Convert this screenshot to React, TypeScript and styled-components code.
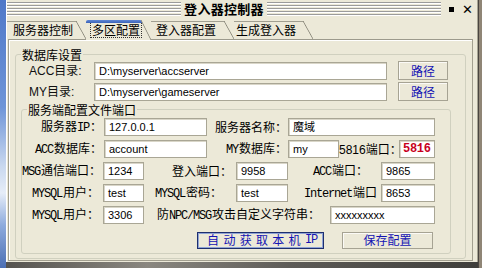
import React from "react";
import styled, { createGlobalStyle, css } from "styled-components";

const Global = createGlobalStyle`
  html, body { margin: 0; padding: 0; }
  body { width: 482px; height: 268px; overflow: hidden; background: #6f8fcf; }
  * { box-sizing: border-box; }
`;

const CJK = `"Noto Sans CJK SC", sans-serif`;
const SANS = `"Liberation Sans", "Noto Sans CJK SC", sans-serif`;

const Desktop = styled.div`
  display: flex;
  width: 482px;
  height: 268px;
`;

const DesktopEdge = styled.div`
  width: 6px;
  background: linear-gradient(
    to bottom,
    #4f78c8 0%,
    #6f95d8 40%,
    #c9d8ef 62%,
    #e6edf8 72%,
    #8eabdd 84%,
    #4c6fb4 100%
  );
`;

const Main = styled.div`
  display: flex;
  flex-direction: column;
  width: 472px;
`;

const Taskbar = styled.div`
  flex: 1;
  background: linear-gradient(to right, #55534f, #8a8780 30%, #5d5b57 60%, #3f3e3b);
`;

const RightEdge = styled.div`
  width: 4px;
  background: linear-gradient(to right, #4a4540 0 1px, #8f8576 1px);
`;

const Window = styled.div`
  height: 262px;
  display: flex;
  flex-direction: column;
  background: #ece9d8;
  box-shadow: inset 1px 0 0 #ffffff, inset -1px 0 0 #a7a493;
  font-family: ${CJK};
  font-size: 12px;
  color: #000;
`;

const TitleBar = styled.div`
  height: 20px;
  display: flex;
  align-items: center;
  padding-left: 1px;
`;

const Stripes = styled.div`
  flex: 1;
  height: 15px;
  background: repeating-linear-gradient(
    to bottom,
    #9b9b9b 0 1px,
    #ffffff 1px 2px,
    #ece9d8 2px 3px
  );
`;

const Title = styled.div`
  margin: 0 3px;
  font-weight: bold;
  font-size: 13px;
  line-height: 18px;
  letter-spacing: 0.3px;
`;

const Controls = styled.div`
  width: 37px;
  display: flex;
  align-items: center;
  justify-content: flex-end;
  gap: 8px;
  padding-right: 5px;
`;

const Square = styled.span`
  width: 5px;
  height: 5px;
  background: #000;
`;

const Cross = styled.span`
  font-family: "DejaVu Sans", sans-serif;
  font-size: 13px;
  line-height: 13px;
`;

const Body = styled.div`
  flex: 1;
  display: flex;
  flex-direction: column;
  padding: 0 5px 2px 2px;
`;

const TabStrip = styled.div`
  height: 21px;
  display: flex;
  align-items: flex-end;
  margin-left: -1px;
  position: relative;
  z-index: 1;
`;

const Tab = styled.div<{ $w: number; $pl: number; $active?: boolean }>`
  position: relative;
  width: ${(p) => p.$w}px;
  height: 18px;
  padding-left: ${(p) => p.$pl}px;
  display: flex;
  align-items: center;
  font-size: 12px;
  line-height: 14px;
  white-space: nowrap;
  background: #ece9d8;
  &::before {
    content: "";
    position: absolute;
    left: 0;
    top: 0;
    right: 9px;
    height: 1px;
    background: #a19f91;
  }
  &::after {
    content: "";
    position: absolute;
    right: 0;
    top: 0;
    bottom: 0;
    width: 10px;
    background: linear-gradient(
      to top right,
      transparent calc(50% - 0.8px),
      #8d8b7d 50%,
      transparent calc(50% + 0.8px)
    );
  }
  ${(p) =>
    p.$active &&
    css`
      height: 20px;
      margin-bottom: -1px;
      &::before {
        height: 3px;
        border-radius: 2px 2px 0 0;
        background: linear-gradient(to bottom, #5f86d6, #3a63b8);
      }
    `}
`;

const Focus = styled.span`
  outline: 1px dotted #333;
  outline-offset: 0px;
  padding: 0 1px;
`;

const Panel = styled.div`
  flex: 1;
  display: flex;
  flex-direction: column;
  border: 1px solid #a3a090;
  border-top-color: #9c9a8c;
  box-shadow: inset 1px 1px 0 #fff;
  padding: 8px 6px 1px 6px;
`;

const Group = styled.fieldset<{ $w?: number; $ml?: number }>`
  margin: 0 0 0 ${(p) => p.$ml ?? 0}px;
  padding: 0;
  ${(p) => (p.$w ? `width: ${p.$w}px;` : "")}
  border: 1px solid #d0d0bf;
  border-radius: 3px;
  min-inline-size: 0;
  display: flex;
  flex-direction: column;
`;

const Outer = styled(Group)`
  flex: 1;
  padding-bottom: 4px;
`;

const Legend = styled.legend`
  margin-left: 5px;
  padding: 0 1px;
  font-size: 12px;
  line-height: 13px;
  color: #000;
`;

const PathRow = styled.div`
  display: flex;
  align-items: center;
  height: 19px;
  padding-left: 13px;
  margin-bottom: 2px;
`;

const PathLabel = styled.div`
  width: 65px;
  font-family: ${SANS};
  font-size: 12px;
  line-height: 14px;
  color: #111;
`;

const Field = styled.div<{ $w: number; $red?: boolean }>`
  width: ${(p) => p.$w}px;
  height: 18px;
  flex: none;
  background: #fff;
  border: 1px solid #a9a695;
  box-shadow: inset 1px 1px 0 #d9d6c8;
  padding: 0 0 0 4px;
  display: flex;
  align-items: center;
  font-family: ${SANS};
  font-size: 11px;
  line-height: 14px;
  color: #000;
  white-space: nowrap;
  overflow: hidden;
  ${(p) =>
    p.$red &&
    css`
      font-family: "Liberation Mono", monospace;
      font-weight: bold;
      color: #c8001c;
      padding-left: 3px;
      font-size: 12px;
      letter-spacing: -0.3px;
    `}
`;

const Button = styled.div<{ $w: number; $focus?: boolean; $h?: number }>`
  width: ${(p) => p.$w}px;
  height: ${(p) => p.$h ?? 19}px;
  flex: none;
  display: flex;
  align-items: center;
  justify-content: center;
  border: 1px solid #a6a393;
  box-shadow: inset 1px 1px 0 #fbfaf6;
  background: #ece9d8;
  color: #1414b4;
  font-size: 12px;
  line-height: 14px;
  white-space: nowrap;
  ${(p) =>
    p.$focus &&
    css`
      border-color: #1e2f6e;
      box-shadow: inset 1px 1px 0 #8fa3d6, inset -1px -1px 0 #8fa3d6;
      letter-spacing: 4.3px;
      padding-left: 4px;
    `}
`;

const Gap = styled.div<{ $w: number }>`
  width: ${(p) => p.$w}px;
  flex: none;
`;

const Inner = styled(Group)`
  margin-top: 0;
  padding: 2px 0 4px 0;
  gap: 4px;
`;

const Row = styled.div<{ $pl?: number; $mt?: number }>`
  display: flex;
  align-items: center;
  height: 18px;
  padding-left: ${(p) => p.$pl ?? 0}px;
  margin-top: ${(p) => p.$mt ?? 0}px;
`;

const Lbl = styled.div<{ $w: number; $pr?: number }>`
  width: ${(p) => p.$w}px;
  flex: none;
  text-align: right;
  padding-right: ${(p) => p.$pr ?? 1}px;
  font-size: 12px;
  line-height: 14px;
  white-space: nowrap;
  color: #000;
`;

const Lat = styled.span`
  font-family: "Liberation Mono", monospace;
  font-size: 12px;
  letter-spacing: -1.2px;
  margin-right: 1px;
`;

const Tah = styled.span`
  font-family: "Liberation Sans", sans-serif;
  font-size: 12px;
`;

export default function App() {
  return (
    <>
      <Global />
      <Desktop>
        <DesktopEdge />
        <Main>
          <Window>
            <TitleBar>
              <Stripes />
              <Title>登入器控制器</Title>
              <Stripes />
              <Controls>
                <Square />
                <Cross>✕</Cross>
              </Controls>
            </TitleBar>
            <Body>
              <TabStrip>
                <Tab $w={79} $pl={6}>服务器控制</Tab>
                <Tab $w={65} $pl={5} $active>
                  <Focus>多区配置</Focus>
                </Tab>
                <Tab $w={83} $pl={5}>登入器配置</Tab>
                <Tab $w={79} $pl={2}>生成登入器</Tab>
              </TabStrip>
              <Panel>
                <Outer>
                  <Legend>数据库设置</Legend>
                  <PathRow>
                    <PathLabel>ACC目录:</PathLabel>
                    <Field $w={293}>D:\myserver\accserver</Field>
                    <Gap $w={11} />
                    <Button $w={50}>路径</Button>
                  </PathRow>
                  <PathRow>
                    <PathLabel>MY目录:</PathLabel>
                    <Field $w={293}>D:\myserver\gameserver</Field>
                    <Gap $w={11} />
                    <Button $w={50}>路径</Button>
                  </PathRow>
                  <Inner $ml={5} $w={430}>
                    <Legend>服务端配置文件端口</Legend>
                    <Row>
                      <Lbl $w={82} $pr={2}>服务器<Lat>IP</Lat>：</Lbl>
                      <Field $w={103}>127.0.0.1</Field>
                      <Lbl $w={81} $pr={1}>服务器名称：</Lbl>
                      <Field $w={147}>魔域</Field>
                    </Row>
                    <Row>
                      <Lbl $w={82} $pr={2}><Lat>ACC</Lat>数据库：</Lbl>
                      <Field $w={103}>account</Field>
                      <Lbl $w={81} $pr={1}><Lat>MY</Lat>数据库：</Lbl>
                      <Field $w={51}>my</Field>
                      <Lbl $w={60} $pr={0}><Tah>5816</Tah>端口：</Lbl>
                      <Field $w={36} $red>5816</Field>
                    </Row>
                    <Row>
                      <Lbl $w={81} $pr={4}><Lat>MSG</Lat>通信端口：</Lbl>
                      <Field $w={41}>1234</Field>
                      <Lbl $w={92} $pr={4}>登入端口：</Lbl>
                      <Field $w={52}>9958</Field>
                      <Lbl $w={93} $pr={13}><Lat>ACC</Lat>端口：</Lbl>
                      <Field $w={54}>9865</Field>
                    </Row>
                    <Row>
                      <Lbl $w={81} $pr={4}><Lat>MYSQL</Lat>用户：</Lbl>
                      <Field $w={41}>test</Field>
                      <Lbl $w={92} $pr={14}><Lat>MYSQL</Lat>密码：</Lbl>
                      <Field $w={52}>test</Field>
                      <Lbl $w={93} $pr={4}><Lat>Internet</Lat>端口</Lbl>
                      <Field $w={54}>8653</Field>
                    </Row>
                    <Row>
                      <Lbl $w={81} $pr={4}><Lat>MYSQL</Lat>用户：</Lbl>
                      <Field $w={41}>3306</Field>
                      <Lbl $w={186} $pr={10}>防<Lat>NPC/MSG</Lat>攻击自定义字符串：</Lbl>
                      <Field $w={105}>xxxxxxxxx</Field>
                    </Row>
                    <Row $pl={175} $mt={3}>
                      <Button $w={127} $h={17} $focus>
                        自动获取本机<Lat>IP</Lat>
                      </Button>
                      <Gap $w={18} />
                      <Button $w={91} $h={17}>保存配置</Button>
                    </Row>
                  </Inner>
                </Outer>
              </Panel>
            </Body>
          </Window>
          <Taskbar />
        </Main>
        <RightEdge />
      </Desktop>
    </>
  );
}
